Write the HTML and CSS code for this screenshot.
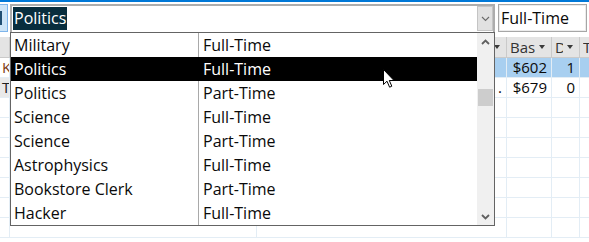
FILE: index.html
```html
<!DOCTYPE html>
<html>
<head>
<meta charset="utf-8">
<link rel="stylesheet" href="styles.css">
</head>
<body>
<div class="screen">
  <div class="topline"></div>
  <div class="toolbar">
    <div class="stub-btn"><span class="stub-mark"></span></div>
    <div class="combo">
      <span class="sel">Politics</span>
      <span class="combo-fill"></span>
      <span class="combo-btn">
        <svg width="9" height="6" viewBox="0 0 9 6"><path d="M1 1 L4.5 4.5 L8 1" fill="none" stroke="#6a6a6a" stroke-width="1.1"/></svg>
      </span>
    </div>
    <div class="textbox">Full-Time</div>
  </div>

  <div class="sheet">
    <div class="hcell stub"></div>
    <div class="hcell"></div>
    <div class="hcell"><span class="htext"></span><span class="harrow"></span></div>
    <div class="hcell"><span class="htext">Base</span><span class="harrow"></span></div>
    <div class="hcell"><span class="htext">D</span><span class="harrow"></span></div>
    <div class="hcell"><span class="htext">T</span></div>

    <div class="cell stub k">K</div>
    <div class="cell hl"></div>
    <div class="cell hl"></div>
    <div class="cell hl num">$602</div>
    <div class="cell hl num">1</div>
    <div class="cell hl"></div>

    <div class="cell stub gray">T</div>
    <div class="cell"></div>
    <div class="cell num">.</div>
    <div class="cell num">$679</div>
    <div class="cell num">0</div>
    <div class="cell"></div>

    <div class="cell stub"></div><div class="cell"></div><div class="cell"></div><div class="cell"></div><div class="cell"></div><div class="cell"></div>
    <div class="cell stub"></div><div class="cell"></div><div class="cell"></div><div class="cell"></div><div class="cell"></div><div class="cell"></div>
    <div class="cell stub"></div><div class="cell"></div><div class="cell"></div><div class="cell"></div><div class="cell"></div><div class="cell"></div>
    <div class="cell stub"></div><div class="cell"></div><div class="cell"></div><div class="cell"></div><div class="cell"></div><div class="cell"></div>
    <div class="cell stub"></div><div class="cell"></div><div class="cell"></div><div class="cell"></div><div class="cell"></div><div class="cell"></div>
    <div class="cell stub"></div><div class="cell"></div><div class="cell"></div><div class="cell"></div><div class="cell"></div><div class="cell"></div>
    <div class="cell stub"></div><div class="cell"></div><div class="cell"></div><div class="cell"></div><div class="cell"></div><div class="cell"></div>
  </div>

  <div class="dropdown">
    <div class="list">
      <div class="row"><span class="c1">Military</span><span class="c2">Full-Time</span></div>
      <div class="row selected"><span class="c1">Politics</span><span class="c2">Full-Time</span></div>
      <div class="row"><span class="c1">Politics</span><span class="c2">Part-Time</span></div>
      <div class="row"><span class="c1">Science</span><span class="c2">Full-Time</span></div>
      <div class="row"><span class="c1">Science</span><span class="c2">Part-Time</span></div>
      <div class="row"><span class="c1">Astrophysics</span><span class="c2">Full-Time</span></div>
      <div class="row"><span class="c1">Bookstore Clerk</span><span class="c2">Part-Time</span></div>
      <div class="row"><span class="c1">Hacker</span><span class="c2">Full-Time</span></div>
    </div>
    <div class="scrollbar">
      <span class="sb-arrow">
        <svg width="9" height="6" viewBox="0 0 9 6"><path d="M1 5 L4.5 1.5 L8 5" fill="none" stroke="#606060" stroke-width="1.8"/></svg>
      </span>
      <span class="sb-space-top"></span>
      <span class="sb-thumb"></span>
      <span class="sb-space"></span>
      <span class="sb-arrow">
        <svg width="9" height="6" viewBox="0 0 9 6"><path d="M1 1 L4.5 4.5 L8 1" fill="none" stroke="#606060" stroke-width="1.8"/></svg>
      </span>
    </div>
  </div>

  <svg class="cursor" width="13" height="20" viewBox="0 0 13 20">
    <path d="M0.5 0.5 L0.5 15.5 L4 12.2 L6.6 18.2 L8.8 17.2 L6.3 11.5 L11 11.5 Z" fill="#fff" stroke="#000" stroke-width="1"/>
  </svg>
</div>
</body>
</html>
```

FILE: styles.css
```css
* { box-sizing: border-box; }
html, body { margin: 0; padding: 0; background: #fff; }
.screen {
  position: relative;
  width: 589px;
  height: 242px;
  overflow: hidden;
  background: #fff;
  font-family: "Open Sans", "Segoe UI", sans-serif;
  color: #0a0a0a;
}
.topline { height: 2px; background: #0078d7; }
.toolbar {
  display: flex;
  align-items: flex-start;
  height: 30px;
}
.stub-btn {
  width: 8px;
  height: 28px;
  margin-top: 2px;
  background: #cce4f7;
  border: 1px solid #7eb4ea;
  border-left: none;
  display: flex;
  align-items: center;
  flex: none;
}
.stub-mark { width: 2px; height: 14px; background: #1f4e72; }
.combo {
  margin-left: 2px;
  margin-top: 2px;
  width: 485px;
  height: 28px;
  border: 2px solid #adadad;
  border-bottom: none;
  display: flex;
  align-items: stretch;
  font-size: 16px;
  flex: none;
}
.sel {
  margin: 1px 0 2px 1px;
  padding: 0 1px 0 1px;
  background: #082d3d;
  color: #fff;
  line-height: 23px;
}
.combo-fill { flex: 1; }
.combo-btn {
  width: 16px;
  margin-bottom: 1px;
  background: #e1e1e1;
  border: 1px solid #c4c4c4;
  display: flex;
  align-items: center;
  justify-content: center;
}
.textbox {
  margin-left: 3px;
  margin-top: 2px;
  width: 89px;
  height: 28px;
  border: 1px solid #a6a6a6;
  box-shadow: inset 0 0 0 1px #ececec;
  font-size: 16px;
  line-height: 26px;
  padding-left: 2px;
  white-space: nowrap;
  overflow: hidden;
  flex: none;
}
.sheet {
  margin-top: 5px;
  width: 630px;
  display: grid;
  grid-template-columns: 10px 247px 250px 45px 28px 50px;
  grid-template-rows: 21px repeat(9, 20px);
  font-family: "Open Sans", "Segoe UI", sans-serif;
  font-size: 15px;
}
.hcell {
  background: #e4e4e4;
  border-right: 1px solid #cacaca;
  border-bottom: 1px solid #cacaca;
  display: flex;
  align-items: center;
  padding: 0 0 0 3px;
  overflow: hidden;
  color: #333;
  white-space: nowrap;
}
.htext { flex: 1; overflow: hidden; line-height: 20px; }
.harrow {
  width: 0; height: 0;
  border-left: 3.5px solid transparent;
  border-right: 3.5px solid transparent;
  border-top: 4px solid #3a3a3a;
  margin: 0 6px 0 4px;
  flex: none;
}
.cell {
  border-right: 1px solid #e3edf5;
  border-bottom: 1px solid #e3edf5;
  line-height: 19px;
  padding: 0 4px;
  overflow: hidden;
  white-space: nowrap;
}
.cell.stub { padding: 0 0 0 2px; background: #fff; }
.cell.k { color: #7a3a10; }
.cell.gray { background: #e9e9e9; color: #222; }
.cell.hl { background: #a8cff0; }
.cell.num { text-align: right; }
.dropdown {
  position: absolute;
  left: 10px;
  top: 32px;
  width: 485px;
  height: 194px;
  border: 1px solid #646464;
  background: #fff;
  display: flex;
  font-size: 16px;
}
.list { flex: 1; display: flex; flex-direction: column; }
.row {
  height: 24px;
  display: grid;
  grid-template-columns: 188px 1fr;
  line-height: 24px;
  white-space: nowrap;
}
.c1 { padding-left: 3px; border-right: 1px solid #a9a9a9; }
.c2 { padding-left: 4px; }
.row.selected { background: #000; color: #fff; }
.row.selected .c1 { border-right-color: #000; }
.scrollbar {
  width: 17px;
  background: #f0f0f0;
  display: flex;
  flex-direction: column;
  align-items: center;
}
.sb-arrow { height: 17px; display: flex; align-items: center; justify-content: center; width: 100%; }
.sb-space-top { height: 39px; }
.sb-thumb { width: 15px; height: 17px; background: #cdcdcd; }
.sb-space { flex: 1; }
.cursor { position: absolute; left: 383px; top: 69px; }
```
